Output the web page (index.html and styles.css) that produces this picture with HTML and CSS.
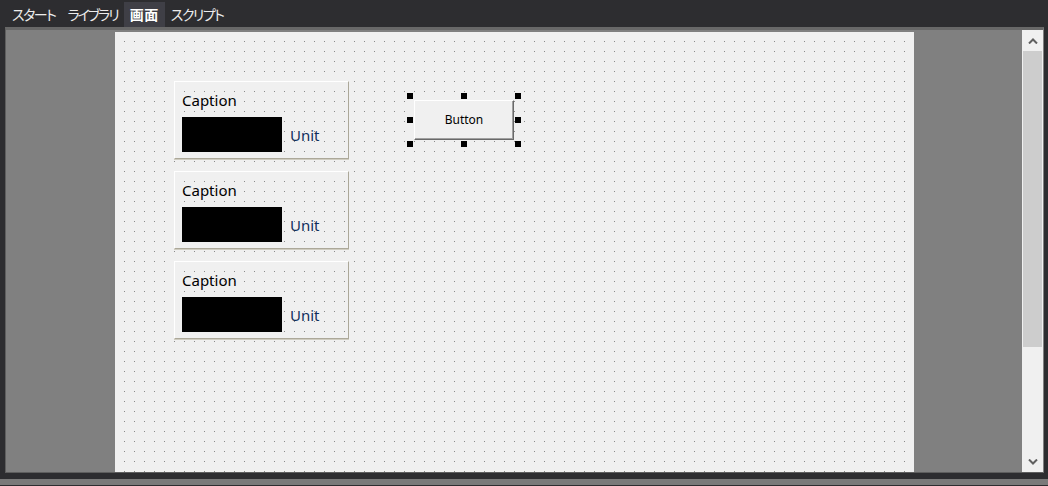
FILE: index.html
```html
<!DOCTYPE html>
<html lang="ja">
<head>
<meta charset="utf-8">
<title>画面</title>
<link rel="stylesheet" href="styles.css">
</head>
<body>
<div class="tabbar">
  <div class="tab">スタート</div>
  <div class="tab tight">ライブラリ</div>
  <div class="tab active">画面</div>
  <div class="tab">スクリプト</div>
</div>
<div class="main">
  <div class="workspace">
    <div class="canvas">
      <div class="group g1">
        <div class="caption">Caption</div>
        <div class="row"><div class="value"></div><span class="unit">Unit</span></div>
      </div>
      <div class="group g2">
        <div class="caption">Caption</div>
        <div class="row"><div class="value"></div><span class="unit">Unit</span></div>
      </div>
      <div class="group g3">
        <div class="caption">Caption</div>
        <div class="row"><div class="value"></div><span class="unit">Unit</span></div>
      </div>
      <div class="selection">
        <div class="button">Button</div>
        <span class="handle h-tl"></span>
        <span class="handle h-tc"></span>
        <span class="handle h-tr"></span>
        <span class="handle h-ml"></span>
        <span class="handle h-mr"></span>
        <span class="handle h-bl"></span>
        <span class="handle h-bc"></span>
        <span class="handle h-br"></span>
      </div>
    </div>
  </div>
  <div class="scrollbar">
    <div class="sb-btn">
      <svg width="10" height="6" viewBox="0 0 10 6"><path d="M1 5.5 L5 1.5 L9 5.5" fill="none" stroke="#606060" stroke-width="2"/></svg>
    </div>
    <div class="sb-thumb"></div>
    <div class="sb-track"></div>
    <div class="sb-btn">
      <svg width="10" height="6" viewBox="0 0 10 6"><path d="M1 0.5 L5 4.5 L9 0.5" fill="none" stroke="#606060" stroke-width="2"/></svg>
    </div>
  </div>
</div>
<div class="statusline"></div>
</body>
</html>
```
FILE: styles.css
```css
html, body {
  margin: 0;
  padding: 0;
}
body {
  background: #2d2d30;
  width: 1048px;
  height: 486px;
  overflow: hidden;
  font-family: "Noto Sans", "Open Sans", sans-serif;
}
.tabbar {
  height: 27px;
  display: flex;
  align-items: flex-end;
  padding-left: 6px;
  box-sizing: border-box;
}
.tab {
  height: 25px;
  line-height: 24px;
  padding: 0 6px;
  color: #ececec;
  font-family: "Noto Sans CJK JP", sans-serif;
  font-size: 14px;
  font-feature-settings: "palt";
  letter-spacing: -1.5px;
}
.tab.tight {
  letter-spacing: -2px;
}
.tab.active {
  background: #3f3f46;
  color: #ffffff;
  font-weight: 700;
  letter-spacing: 0.5px;
}
.main {
  margin-left: 5px;
  width: 1039px;
  height: 446px;
  box-sizing: border-box;
  border-top: 3px solid #686868;
  border-left: 1px solid #5e5e5e;
  border-right: 1px solid #808080;
  border-bottom: 1px solid #5e5e5e;
  display: flex;
}
.workspace {
  flex: 1;
  background: #808080;
  padding-top: 1px;
  display: flex;
  justify-content: center;
}
.canvas {
  position: relative;
  width: 800px;
  height: 441px;
  box-sizing: border-box;
  padding: 1px 0 0 1px;
  background-color: #f0f0f0;
  background-image: conic-gradient(from 270deg at 1px 1px, #8a8a8a 90deg, transparent 0);
  background-size: 10px 10px;
  background-position: 0 0;
  background-clip: content-box;
}
.group {
  position: absolute;
  left: 60px;
  width: 175px;
  height: 78px;
  box-sizing: border-box;
  border: 1px solid #ffffff;
  border-right-color: #aca899;
  border-bottom-color: #aca899;
  box-shadow: 0 1px 0 #cfccc0;
  padding: 8px 0 0 7px;
}
.g1 { top: 50px; }
.g2 { top: 140px; }
.g3 { top: 230px; }
.caption {
  font-size: 15px;
  line-height: 20px;
  color: #000;
}
.row {
  display: flex;
  align-items: center;
  margin-top: 7px;
}
.value {
  width: 100px;
  height: 35px;
  background: #000;
}
.unit {
  margin-left: 8px;
  font-size: 15px;
  line-height: 20px;
  color: #0f2f5c;
}
.selection {
  position: absolute;
  left: 296px;
  top: 65px;
  width: 108px;
  height: 48px;
}
.button {
  position: absolute;
  left: 4px;
  top: 4px;
  width: 100px;
  height: 40px;
  box-sizing: border-box;
  border-top: 1px solid #ffffff;
  border-left: 1px solid #ffffff;
  border-right: 1px solid #696969;
  border-bottom: 1px solid #696969;
  box-shadow: inset -1px -1px 0 #a0a0a0;
  background: #f0f0f0;
  font-size: 12px;
  color: #000;
  display: flex;
  align-items: center;
  justify-content: center;
  padding-bottom: 1px;
}
.handle {
  position: absolute;
  width: 6px;
  height: 6px;
  background: #000;
}
.h-tl { left: -3px; top: -3px; }
.h-tc { left: 51px; top: -3px; }
.h-tr { left: 105px; top: -3px; }
.h-ml { left: -3px; top: 21px; }
.h-mr { left: 105px; top: 21px; }
.h-bl { left: -3px; top: 45px; }
.h-bc { left: 51px; top: 45px; }
.h-br { left: 105px; top: 45px; }
.scrollbar {
  width: 21px;
  background: #f0f0f0;
  display: flex;
  flex-direction: column;
}
.sb-btn {
  height: 21px;
  display: flex;
  align-items: center;
  justify-content: center;
}
.sb-thumb {
  height: 296px;
  margin: 0 1px;
  background: #cdcdcd;
}
.sb-track {
  flex: 1;
}
.statusline {
  margin-top: 6px;
  height: 6px;
  background: #7a7a7a;
}
```
